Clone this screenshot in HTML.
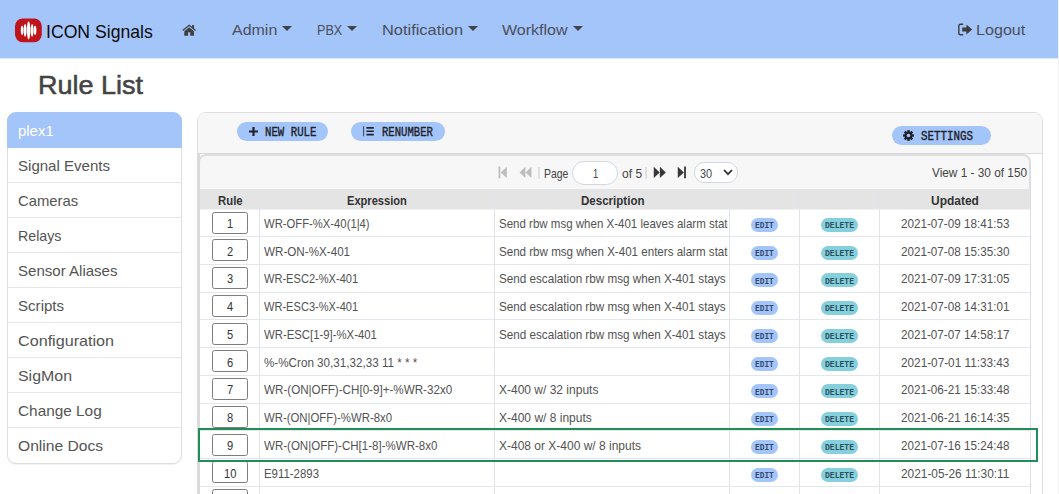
<!DOCTYPE html>
<html lang="en">
<head>
<meta charset="utf-8">
<title>Rule List</title>
<style>
html,body{margin:0;padding:0;}
body{width:1059px;height:494px;overflow:hidden;background:#fff;position:relative;
  font-family:"Liberation Sans",sans-serif;color:#444;}
*{box-sizing:border-box;}
.abs{position:absolute;}
.t{position:absolute;white-space:pre;line-height:1;transform-origin:0 0;font-family:"Liberation Sans",sans-serif;}
.hs{-webkit-text-stroke:0.55px #444;}
.bs{-webkit-text-stroke:0.4px #1f2329;}
.m{font-family:"Liberation Mono",monospace;}
#nav{position:absolute;left:0;top:0;width:1058px;height:58px;background:#a4c5fa;}
#edge{position:absolute;left:1058px;top:0;width:1px;height:494px;background:#f2f2f2;}
.caret{position:absolute;top:26.3px;width:0;height:0;margin-left:-0.4px;border-left:5px solid transparent;border-right:5px solid transparent;border-top:5px solid #3f434b;}
#side{position:absolute;left:7px;top:112px;width:175px;height:352px;border:1px solid #dedede;border-radius:9px;overflow:hidden;background:#fff;box-shadow:0 1px 0 rgba(0,0,0,.05);}
#side div{height:35px;border-bottom:1px solid #e8e8e8;}
#side div.act{background:#a4c5fa;border-bottom-color:#a4c5fa;}
#act{position:absolute;left:7px;top:112px;width:175px;height:36px;background:#a4c5fa;border-radius:9px 9px 0 0;}
#side div:last-child{border-bottom:0;}
#panel{position:absolute;left:197px;top:112px;width:846px;height:400px;border:1px solid #dedede;border-radius:9px 9px 0 0;background:#fff;overflow:hidden;}
#tbar{position:absolute;left:0;top:0;width:844px;height:41px;border-bottom:1px solid #dadada;background:#f7f7f7;}
.pill{position:absolute;margin-top:0.4px;height:18.5px;border-radius:9.5px;background:#a4c5fa;}
#grid{position:absolute;left:198px;top:154px;width:833px;height:360px;border:1px solid #d4d4d4;border-top:2px solid #dfdfdf;border-left:2px solid #dadada;border-right:2px solid #dcdce2;border-radius:8px 8px 0 0;background:#f7f7f7;overflow:hidden;}
#hdr{position:absolute;left:200px;top:189px;width:830px;height:20px;background:#e4e4e4;}
#white{position:absolute;left:200px;top:209px;border-top:1px solid #f2f2f2;width:830px;height:300px;background:#fff;}
.csep{position:absolute;top:189px;width:1px;height:320px;background:#e0e3ea;}
.rsep{position:absolute;left:200px;width:830px;height:1px;background:#e3e6ec;}
.num{position:absolute;left:212px;width:36px;height:22px;border:1px solid #7d7d7d;border-radius:2.5px;background:#fff;}
.pe{position:absolute;left:750.8px;width:27.3px;height:14px;border-radius:7px;background:#a4c5fa;}
.pd{position:absolute;left:820.8px;width:37.4px;height:14px;border-radius:7px;background:#86cfdc;}
.clip{position:absolute;left:495px;width:232.5px;height:16px;overflow:hidden;}
.sep{position:absolute;top:166.5px;width:1.6px;height:12px;background:#e0e0e0;}
.pin{position:absolute;left:572.2px;top:160.5px;width:45.4px;height:24.8px;border:1.3px solid #d2d8df;border-radius:12.5px;background:#fff;}
.psel{position:absolute;left:694px;top:162px;width:44px;height:20.5px;border:1.3px solid #d2d8df;border-radius:10px;background:#fff;}
#green{position:absolute;left:198px;top:428px;width:840px;height:34px;border:2px solid #1f8f57;}
</style>
</head>
<body>
<div id="nav"></div>
<div id="edge"></div>
<div class="abs" style="left:0;top:58px;width:1058px;height:1px;background:#dce8fd"></div>

<svg class="abs" style="left:15px;top:18.1px" width="27" height="25" viewBox="0 0 27 25">
  <rect x="0" y="0.4" width="26.8" height="23.8" rx="7.6" ry="7.6" fill="#bf141b"/>
  <g fill="#fff">
    <ellipse cx="7.1" cy="12.3" rx="1.3" ry="4.6"/>
    <ellipse cx="10.1" cy="12.3" rx="1.45" ry="6.4"/>
    <ellipse cx="13.6" cy="12.3" rx="1.7" ry="9.1"/>
    <ellipse cx="17.1" cy="12.3" rx="1.45" ry="6.4"/>
    <ellipse cx="20.1" cy="12.3" rx="1.3" ry="4.6"/>
  </g>
</svg>

<svg class="abs" style="left:182px;top:23.6px" width="14.3" height="12.2" viewBox="0 0 15 13" preserveAspectRatio="none">
  <path d="M7.5 0.4 L0.3 6.4 L1.2 7.4 L7.5 2.2 L13.8 7.4 L14.7 6.4 L12.6 4.6 L12.6 1 L10.6 1 L10.6 3 Z" fill="#404040"/>
  <path d="M7.5 3.4 L2.4 7.6 L2.4 12.6 L6.4 12.6 L6.4 8.8 L8.6 8.8 L8.6 12.6 L12.6 12.6 L12.6 7.6 Z" fill="#404040"/>
</svg>

<div class="caret" style="left:282.7px"></div>
<div class="caret" style="left:347.5px"></div>
<div class="caret" style="left:468px"></div>
<div class="caret" style="left:573px"></div>

<svg class="abs" style="left:958px;top:23px" width="15" height="13" viewBox="0 0 15 13">
  <path d="M5.2 1.2 H2.6 Q0.8 1.2 0.8 3 V10 Q0.8 11.8 2.6 11.8 H5.2" fill="none" stroke="#3d3d3d" stroke-width="1.4"/>
  <path d="M4.2 4.4 H8.4 V1.4 L14.2 6.5 L8.4 11.6 V8.6 H4.2 Z" fill="#3d3d3d"/>
</svg>

<div id="side">
  <div class="act"></div><div></div><div></div><div></div><div></div><div></div><div></div><div></div><div></div><div></div>
</div>

<div id="act"></div>

<div id="panel"><div id="tbar"></div></div>
<div class="pill" style="left:237.2px;top:121.8px;width:91.3px;"></div>
<div class="pill" style="left:350.6px;top:121.8px;width:94.4px;"></div>
<div class="pill" style="left:891.9px;top:125.9px;width:98.8px;"></div>
<!-- plus icon -->
<svg class="abs" style="left:249px;top:126.5px" width="9" height="9" viewBox="0 0 9 9"><path d="M3.4 0 H5.6 V3.4 H9 V5.6 H5.6 V9 H3.4 V5.6 H0 V3.4 H3.4 Z" fill="#1f2329"/></svg>
<!-- list-ol icon -->
<svg class="abs" style="left:362.5px;top:126.4px" width="11" height="10.4" viewBox="0 0 11 10"><path d="M0.3 0 H1.1 V10 H0.3 Z M3.4 0.9 H10.8 V2.6 H3.4 Z M3.4 4.2 H10.8 V5.9 H3.4 Z M3.4 7.5 H10.8 V9.2 H3.4 Z" fill="#1f2329"/></svg>
<!-- gear icon -->
<svg class="abs" style="left:902.7px;top:129.7px" width="11" height="11" viewBox="-5.5 -5.5 11 11">
  <g fill="#1f2329"><circle r="3.9"/>
  <rect x="-1.2" y="-5.4" width="2.4" height="10.8"/>
  <rect x="-1.2" y="-5.4" width="2.4" height="10.8" transform="rotate(45)"/>
  <rect x="-1.2" y="-5.4" width="2.4" height="10.8" transform="rotate(90)"/>
  <rect x="-1.2" y="-5.4" width="2.4" height="10.8" transform="rotate(135)"/>
  </g><circle r="1.8" fill="#a4c5fa"/>
</svg>

<div class="abs" style="left:198px;top:154px;width:2px;height:10px;background:#dadada"></div>
<div id="grid"></div>
<div id="hdr"></div>
<div id="white"></div>
<div class="csep" style="left:259px"></div>
<div class="csep" style="left:494px"></div>
<div class="csep" style="left:729px"></div>
<div class="csep" style="left:799px"></div>
<div class="csep" style="left:879px"></div>

<!-- pager -->
<svg class="abs" style="left:498.3px;top:166px" width="9.6" height="12.8" viewBox="0 0 10 12" preserveAspectRatio="none"><path d="M0.6 0.5 H2.4 V11.5 H0.6 Z M9.2 0.8 V11.2 L2.8 6 Z" fill="#bdbdbd"/></svg>
<svg class="abs" style="left:519.2px;top:166px" width="13.2" height="12.8" viewBox="0 0 14 12" preserveAspectRatio="none"><path d="M6.8 0.8 V11.2 L0.6 6 Z M13.2 0.8 V11.2 L7 6 Z" fill="#bdbdbd"/></svg>
<div class="sep" style="left:538.3px"></div>
<div class="pin"></div>
<div class="sep" style="left:645.2px"></div>
<svg class="abs" style="left:653.2px;top:166px" width="13.4" height="12.8" viewBox="0 0 14 12" preserveAspectRatio="none"><path d="M0.8 0.8 V11.2 L7 6 Z M7.2 0.8 V11.2 L13.4 6 Z" fill="#383838"/></svg>
<svg class="abs" style="left:677.4px;top:166px" width="9.6" height="12.8" viewBox="0 0 10 12" preserveAspectRatio="none"><path d="M0.8 0.8 V11.2 L7.2 6 Z M7.4 0.5 H9.3 V11.5 H7.4 Z" fill="#383838"/></svg>
<div class="psel"></div>
<svg class="abs" style="left:722.7px;top:169.2px" width="10" height="7" viewBox="0 0 10 7"><path d="M1 1 L5 5.2 L9 1" fill="none" stroke="#333" stroke-width="1.8"/></svg>

<div class="rsep" style="top:236.10px"></div>
<div class="num" style="top:211.50px"></div>
<div class="pe" style="top:217.75px"></div><div class="pd" style="top:217.75px"></div>
<div class="rsep" style="top:263.85px"></div>
<div class="num" style="top:239.25px"></div>
<div class="pe" style="top:245.50px"></div><div class="pd" style="top:245.50px"></div>
<div class="rsep" style="top:291.60px"></div>
<div class="num" style="top:267.00px"></div>
<div class="pe" style="top:273.25px"></div><div class="pd" style="top:273.25px"></div>
<div class="rsep" style="top:319.35px"></div>
<div class="num" style="top:294.75px"></div>
<div class="pe" style="top:301.00px"></div><div class="pd" style="top:301.00px"></div>
<div class="rsep" style="top:347.10px"></div>
<div class="num" style="top:322.50px"></div>
<div class="pe" style="top:328.75px"></div><div class="pd" style="top:328.75px"></div>
<div class="rsep" style="top:374.85px"></div>
<div class="num" style="top:350.25px"></div>
<div class="pe" style="top:356.50px"></div><div class="pd" style="top:356.50px"></div>
<div class="rsep" style="top:402.60px"></div>
<div class="num" style="top:378.00px"></div>
<div class="pe" style="top:384.25px"></div><div class="pd" style="top:384.25px"></div>
<div class="rsep" style="top:430.35px"></div>
<div class="num" style="top:405.75px"></div>
<div class="pe" style="top:412.00px"></div><div class="pd" style="top:412.00px"></div>
<div class="rsep" style="top:458.10px"></div>
<div class="num" style="top:433.50px"></div>
<div class="pe" style="top:439.75px"></div><div class="pd" style="top:439.75px"></div>
<div class="rsep" style="top:485.85px"></div>
<div class="num" style="top:461.25px"></div>
<div class="pe" style="top:467.50px"></div><div class="pd" style="top:467.50px"></div>
<div class="rsep" style="top:513.60px"></div>
<div class="num" style="top:489.00px"></div>

<span class="t" style="left:46.2px;top:22.2px;font-size:19px;transform:scaleX(0.9278);color:#0a0a0a">ICON Signals</span>
<span class="t" style="left:232.0px;top:22.0px;font-size:15px;transform:scaleX(1.0651);color:#4a4f5a">Admin</span>
<span class="t" style="left:317.0px;top:22.0px;font-size:15px;transform:scaleX(0.8396);color:#4a4f5a">PBX</span>
<span class="t" style="left:382.0px;top:22.0px;font-size:15px;transform:scaleX(1.0929);color:#4a4f5a">Notification</span>
<span class="t" style="left:502.1px;top:22.0px;font-size:15px;transform:scaleX(1.0683);color:#4a4f5a">Workflow</span>
<span class="t" style="left:975.8px;top:22.0px;font-size:15px;transform:scaleX(1.0743);color:#4a4f5a">Logout</span>
<span class="t hs" style="left:38.3px;top:72.0px;font-size:26.5px;transform:scaleX(1.0183);color:#444">Rule List</span>
<span class="t" style="left:18.3px;top:122.9px;font-size:15px;transform:scaleX(0.9956);color:#fff">plex1</span>
<span class="t" style="left:18.3px;top:158.0px;font-size:15px;transform:scaleX(1.0029);color:#545454">Signal Events</span>
<span class="t" style="left:18.3px;top:193.0px;font-size:15px;transform:scaleX(0.9892);color:#545454">Cameras</span>
<span class="t" style="left:18.3px;top:228.1px;font-size:15px;transform:scaleX(0.9464);color:#545454">Relays</span>
<span class="t" style="left:18.3px;top:263.1px;font-size:15px;transform:scaleX(1.0027);color:#545454">Sensor Aliases</span>
<span class="t" style="left:18.3px;top:298.2px;font-size:15px;transform:scaleX(1.0056);color:#545454">Scripts</span>
<span class="t" style="left:18.3px;top:333.3px;font-size:15px;transform:scaleX(1.0769);color:#545454">Configuration</span>
<span class="t" style="left:18.3px;top:368.3px;font-size:15px;transform:scaleX(1.0618);color:#545454">SigMon</span>
<span class="t" style="left:18.3px;top:403.4px;font-size:15px;transform:scaleX(1.0239);color:#545454">Change Log</span>
<span class="t" style="left:18.3px;top:438.4px;font-size:15px;transform:scaleX(1.0416);color:#545454">Online Docs</span>
<span class="t m bs" style="left:264.5px;top:127.2px;font-size:12.9px;transform:scaleX(0.8321);color:#1f2329">NEW RULE</span>
<span class="t m bs" style="left:382.0px;top:127.2px;font-size:12.9px;transform:scaleX(0.8224);color:#1f2329">RENUMBER</span>
<span class="t m bs" style="left:920.7px;top:131.2px;font-size:12.9px;transform:scaleX(0.8402);color:#1f2329">SETTINGS</span>
<span class="t" style="left:217.6px;top:194.6px;font-size:12.3px;transform:scaleX(0.9229);color:#333;font-weight:bold">Rule</span>
<span class="t" style="left:347.3px;top:194.6px;font-size:12.3px;transform:scaleX(0.9020);color:#333;font-weight:bold">Expression</span>
<span class="t" style="left:580.5px;top:194.6px;font-size:12.3px;transform:scaleX(0.9386);color:#333;font-weight:bold">Description</span>
<span class="t" style="left:931.3px;top:194.6px;font-size:12.3px;transform:scaleX(0.9735);color:#333;font-weight:bold">Updated</span>
<span class="t" style="left:544.0px;top:168.3px;font-size:12.6px;transform:scaleX(0.8293);color:#444">Page</span>
<span class="t" style="left:592.8px;top:167.8px;font-size:12.6px;transform:scaleX(0.7412);color:#444">1</span>
<span class="t" style="left:621.9px;top:168.3px;font-size:12.6px;transform:scaleX(0.9564);color:#444">of 5</span>
<span class="t" style="left:699.9px;top:167.5px;font-size:12.6px;transform:scaleX(0.8633);color:#444">30</span>
<span class="t" style="left:932.2px;top:167.3px;font-size:12.6px;transform:scaleX(0.9388);color:#444">View 1 - 30 of 150</span>
<span class="t" style="left:227.1px;top:217.8px;font-size:12.399999999999999px;transform:scaleX(0.8977);color:#333">1</span>
<span class="t" style="left:264.3px;top:217.8px;font-size:12.7px;transform:scaleX(0.8881);color:#525252">WR-OFF-%X-40(1|4)</span>
<div class="clip" style="top:217.8px"><span class="t" style="left:4.3px;top:0;font-size:12.7px;transform:scaleX(0.9076);color:#525252">Send rbw msg when X-401 leaves alarm state</span></div>
<span class="t" style="left:900.9px;top:217.8px;font-size:12.7px;transform:scaleX(0.9201);color:#525252">2021-07-09 18:41:53</span>
<span class="t m" style="left:755.2px;top:220.9px;font-size:9.4px;transform:scaleX(0.8350);color:#34486a;font-weight:bold">EDIT</span>
<span class="t m" style="left:824.9px;top:220.9px;font-size:9.4px;transform:scaleX(0.8589);color:#2b525c;font-weight:bold">DELETE</span>
<span class="t" style="left:227.1px;top:245.6px;font-size:12.399999999999999px;transform:scaleX(0.8977);color:#333">2</span>
<span class="t" style="left:264.3px;top:245.6px;font-size:12.7px;transform:scaleX(0.9182);color:#525252">WR-ON-%X-401</span>
<div class="clip" style="top:245.6px"><span class="t" style="left:4.3px;top:0;font-size:12.7px;transform:scaleX(0.9128);color:#525252">Send rbw msg when X-401 enters alarm state</span></div>
<span class="t" style="left:900.9px;top:245.6px;font-size:12.7px;transform:scaleX(0.9201);color:#525252">2021-07-08 15:35:30</span>
<span class="t m" style="left:755.2px;top:248.7px;font-size:9.4px;transform:scaleX(0.8350);color:#34486a;font-weight:bold">EDIT</span>
<span class="t m" style="left:824.9px;top:248.7px;font-size:9.4px;transform:scaleX(0.8589);color:#2b525c;font-weight:bold">DELETE</span>
<span class="t" style="left:227.1px;top:273.4px;font-size:12.399999999999999px;transform:scaleX(0.8977);color:#333">3</span>
<span class="t" style="left:264.3px;top:273.4px;font-size:12.7px;transform:scaleX(0.8723);color:#525252">WR-ESC2-%X-401</span>
<div class="clip" style="top:273.4px"><span class="t" style="left:4.3px;top:0;font-size:12.7px;transform:scaleX(0.9207);color:#525252">Send escalation rbw msg when X-401 stays in alarm</span></div>
<span class="t" style="left:900.9px;top:273.4px;font-size:12.7px;transform:scaleX(0.9201);color:#525252">2021-07-09 17:31:05</span>
<span class="t m" style="left:755.2px;top:276.5px;font-size:9.4px;transform:scaleX(0.8350);color:#34486a;font-weight:bold">EDIT</span>
<span class="t m" style="left:824.9px;top:276.5px;font-size:9.4px;transform:scaleX(0.8589);color:#2b525c;font-weight:bold">DELETE</span>
<span class="t" style="left:227.1px;top:301.1px;font-size:12.399999999999999px;transform:scaleX(0.8977);color:#333">4</span>
<span class="t" style="left:264.3px;top:301.1px;font-size:12.7px;transform:scaleX(0.8723);color:#525252">WR-ESC3-%X-401</span>
<div class="clip" style="top:301.1px"><span class="t" style="left:4.3px;top:0;font-size:12.7px;transform:scaleX(0.9207);color:#525252">Send escalation rbw msg when X-401 stays in alarm</span></div>
<span class="t" style="left:900.9px;top:301.1px;font-size:12.7px;transform:scaleX(0.9201);color:#525252">2021-07-08 14:31:01</span>
<span class="t m" style="left:755.2px;top:304.2px;font-size:9.4px;transform:scaleX(0.8350);color:#34486a;font-weight:bold">EDIT</span>
<span class="t m" style="left:824.9px;top:304.2px;font-size:9.4px;transform:scaleX(0.8589);color:#2b525c;font-weight:bold">DELETE</span>
<span class="t" style="left:227.1px;top:328.9px;font-size:12.399999999999999px;transform:scaleX(0.8977);color:#333">5</span>
<span class="t" style="left:264.3px;top:328.9px;font-size:12.7px;transform:scaleX(0.8946);color:#525252">WR-ESC[1-9]-%X-401</span>
<div class="clip" style="top:328.9px"><span class="t" style="left:4.3px;top:0;font-size:12.7px;transform:scaleX(0.9207);color:#525252">Send escalation rbw msg when X-401 stays in alarm</span></div>
<span class="t" style="left:900.9px;top:328.9px;font-size:12.7px;transform:scaleX(0.9201);color:#525252">2021-07-07 14:58:17</span>
<span class="t m" style="left:755.2px;top:332.0px;font-size:9.4px;transform:scaleX(0.8350);color:#34486a;font-weight:bold">EDIT</span>
<span class="t m" style="left:824.9px;top:332.0px;font-size:9.4px;transform:scaleX(0.8589);color:#2b525c;font-weight:bold">DELETE</span>
<span class="t" style="left:227.1px;top:356.6px;font-size:12.399999999999999px;transform:scaleX(0.8977);color:#333">6</span>
<span class="t" style="left:264.3px;top:356.6px;font-size:12.7px;transform:scaleX(0.9184);color:#525252">%-%Cron 30,31,32,33 11 * * *</span>
<span class="t" style="left:900.9px;top:356.6px;font-size:12.7px;transform:scaleX(0.9275);color:#525252">2021-07-01 11:33:43</span>
<span class="t m" style="left:755.2px;top:359.8px;font-size:9.4px;transform:scaleX(0.8350);color:#34486a;font-weight:bold">EDIT</span>
<span class="t m" style="left:824.9px;top:359.8px;font-size:9.4px;transform:scaleX(0.8589);color:#2b525c;font-weight:bold">DELETE</span>
<span class="t" style="left:227.1px;top:384.4px;font-size:12.399999999999999px;transform:scaleX(0.8977);color:#333">7</span>
<span class="t" style="left:264.3px;top:384.4px;font-size:12.7px;transform:scaleX(0.9169);color:#525252">WR-(ON|OFF)-CH[0-9]+-%WR-32x0</span>
<div class="clip" style="top:384.4px"><span class="t" style="left:4.3px;top:0;font-size:12.7px;transform:scaleX(0.9458);color:#525252">X-400 w/ 32 inputs</span></div>
<span class="t" style="left:900.9px;top:384.4px;font-size:12.7px;transform:scaleX(0.9201);color:#525252">2021-06-21 15:33:48</span>
<span class="t m" style="left:755.2px;top:387.5px;font-size:9.4px;transform:scaleX(0.8350);color:#34486a;font-weight:bold">EDIT</span>
<span class="t m" style="left:824.9px;top:387.5px;font-size:9.4px;transform:scaleX(0.8589);color:#2b525c;font-weight:bold">DELETE</span>
<span class="t" style="left:227.1px;top:412.2px;font-size:12.399999999999999px;transform:scaleX(0.8977);color:#333">8</span>
<span class="t" style="left:264.3px;top:412.2px;font-size:12.7px;transform:scaleX(0.8961);color:#525252">WR-(ON|OFF)-%WR-8x0</span>
<div class="clip" style="top:412.2px"><span class="t" style="left:4.3px;top:0;font-size:12.7px;transform:scaleX(0.9466);color:#525252">X-400 w/ 8 inputs</span></div>
<span class="t" style="left:900.9px;top:412.2px;font-size:12.7px;transform:scaleX(0.9201);color:#525252">2021-06-21 16:14:35</span>
<span class="t m" style="left:755.2px;top:415.3px;font-size:9.4px;transform:scaleX(0.8350);color:#34486a;font-weight:bold">EDIT</span>
<span class="t m" style="left:824.9px;top:415.3px;font-size:9.4px;transform:scaleX(0.8589);color:#2b525c;font-weight:bold">DELETE</span>
<span class="t" style="left:227.1px;top:439.9px;font-size:12.399999999999999px;transform:scaleX(0.8977);color:#333">9</span>
<span class="t" style="left:264.3px;top:439.9px;font-size:12.7px;transform:scaleX(0.9089);color:#525252">WR-(ON|OFF)-CH[1-8]-%WR-8x0</span>
<div class="clip" style="top:439.9px"><span class="t" style="left:4.3px;top:0;font-size:12.7px;transform:scaleX(0.9453);color:#525252">X-408 or X-400 w/ 8 inputs</span></div>
<span class="t" style="left:900.9px;top:439.9px;font-size:12.7px;transform:scaleX(0.9201);color:#525252">2021-07-16 15:24:48</span>
<span class="t m" style="left:755.2px;top:443.0px;font-size:9.4px;transform:scaleX(0.8350);color:#34486a;font-weight:bold">EDIT</span>
<span class="t m" style="left:824.9px;top:443.0px;font-size:9.4px;transform:scaleX(0.8589);color:#2b525c;font-weight:bold">DELETE</span>
<span class="t" style="left:224.0px;top:467.7px;font-size:12.399999999999999px;transform:scaleX(0.8988);color:#333">10</span>
<span class="t" style="left:264.3px;top:467.7px;font-size:12.7px;transform:scaleX(0.8996);color:#525252">E911-2893</span>
<span class="t" style="left:900.9px;top:467.7px;font-size:12.7px;transform:scaleX(0.9350);color:#525252">2021-05-26 11:30:11</span>
<span class="t m" style="left:755.2px;top:470.8px;font-size:9.4px;transform:scaleX(0.8350);color:#34486a;font-weight:bold">EDIT</span>
<span class="t m" style="left:824.9px;top:470.8px;font-size:9.4px;transform:scaleX(0.8589);color:#2b525c;font-weight:bold">DELETE</span>

<div id="green"></div>
</body>
</html>
